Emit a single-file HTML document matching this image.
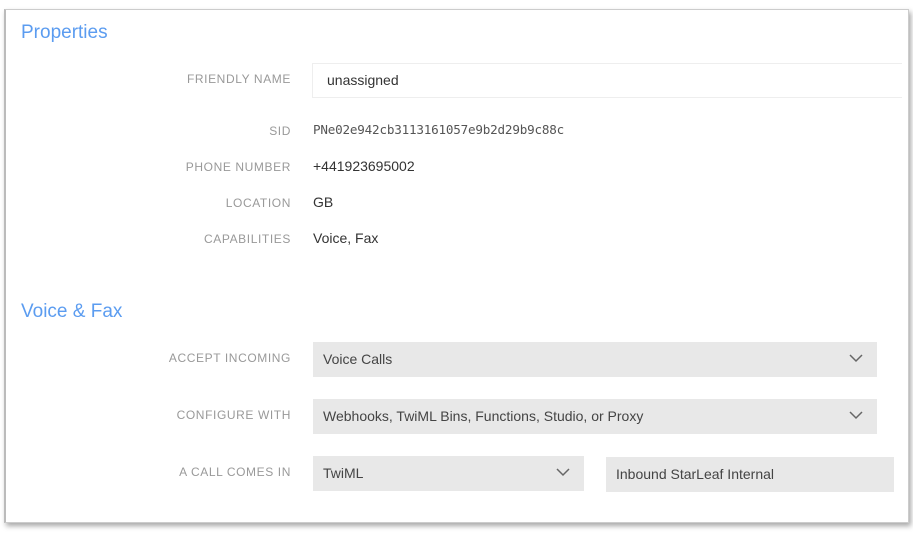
<!DOCTYPE html>
<html><head><style>
body{margin:0;width:913px;height:534px;background:#fff;position:relative;overflow:hidden;font-family:"Liberation Sans",sans-serif}
.card{position:absolute;left:4px;top:9px;width:902px;height:512px;border:1px solid #ccc;border-left:2px solid #bbb;box-shadow:2px 3px 5px rgba(0,0,0,.35);background:#fff}
.h{position:absolute;color:#5b9cf0;font-size:19px}
.l{position:absolute;right:622px;color:#999;font-size:12px;letter-spacing:.6px;text-align:right}
.v{position:absolute;left:313px;color:#333;font-size:14px}
.box{position:absolute;background:#e8e8e8;color:#444;font-size:14px;box-sizing:border-box;padding-left:10px;line-height:35px}
.chev{position:absolute;right:14px;top:12px}
</style></head><body>
<div class="card"></div>
<div class="h" style="left:21px;top:22px">Properties</div>
<div class="l" style="top:72px">FRIENDLY NAME</div>
<div style="position:absolute;left:312px;top:63px;width:590px;height:35px;border:1px solid #eee;border-right:none;box-sizing:border-box;padding-left:14px;line-height:33px;font-size:14px;color:#333">unassigned</div>
<div class="l" style="top:124px">SID</div>
<div class="v" style="color:#555;font-family:'DejaVu Sans Mono','Liberation Mono',monospace;font-size:12.6px;top:122px;letter-spacing:-0.2px">PNe02e942cb3113161057e9b2d29b9c88c</div>
<div class="l" style="top:160px">PHONE NUMBER</div>
<div class="v" style="top:158px">+441923695002</div>
<div class="l" style="top:196px">LOCATION</div>
<div class="v" style="top:194px">GB</div>
<div class="l" style="top:232px">CAPABILITIES</div>
<div class="v" style="top:230px">Voice, Fax</div>
<div class="h" style="left:21px;top:301px">Voice &amp; Fax</div>
<div class="l" style="top:351px">ACCEPT INCOMING</div>
<div class="box" style="left:313px;top:342px;width:564px;height:35px">Voice Calls<svg class="chev" width="14" height="9" viewBox="0 0 14 9"><path d="M1 1l6 6 6-6" fill="none" stroke="#666" stroke-width="1.5"/></svg></div>
<div class="l" style="top:408px">CONFIGURE WITH</div>
<div class="box" style="left:313px;top:399px;width:564px;height:35px">Webhooks, TwiML Bins, Functions, Studio, or Proxy<svg class="chev" width="14" height="9" viewBox="0 0 14 9"><path d="M1 1l6 6 6-6" fill="none" stroke="#666" stroke-width="1.5"/></svg></div>
<div class="l" style="top:465px">A CALL COMES IN</div>
<div class="box" style="left:313px;top:456px;width:271px;height:35px">TwiML<svg class="chev" width="14" height="9" viewBox="0 0 14 9"><path d="M1 1l6 6 6-6" fill="none" stroke="#666" stroke-width="1.5"/></svg></div>
<div class="box" style="left:606px;top:457px;width:288px;height:35px">Inbound StarLeaf Internal</div>
</body></html>
